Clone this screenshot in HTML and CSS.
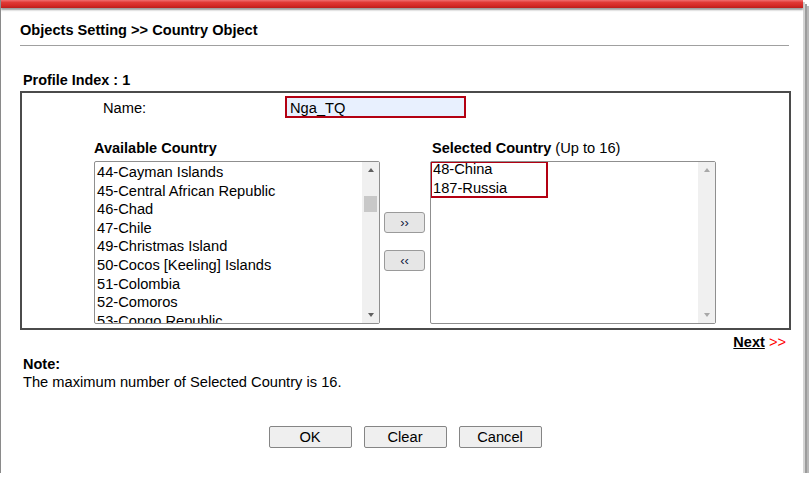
FILE: index.html
```html
<!DOCTYPE html>
<html lang="en">
<head>
<meta charset="UTF-8">
<title>Objects Setting - Country Object</title>
<link rel="stylesheet" href="styles.css">
</head>
<body>

<div class="window">
  <div class="topbar"></div>
  <div class="page">
    <h2 class="title">Objects Setting &gt;&gt; Country Object</h2>

    <div class="profile">Profile Index : 1</div>

    <div class="panel">
      <div class="name-row">
        <span class="name-label">Name:</span>
        <div class="name-input">Nga_TQ</div>
      </div>

      <div class="lists">
        <div class="col">
          <div class="col-title">Available Country</div>
          <div class="listbox">
            <div class="items">
              <div>44-Cayman Islands</div>
              <div>45-Central African Republic</div>
              <div>46-Chad</div>
              <div>47-Chile</div>
              <div>49-Christmas Island</div>
              <div>50-Cocos [Keeling] Islands</div>
              <div>51-Colombia</div>
              <div>52-Comoros</div>
              <div>53-Congo Republic</div>
            </div>
            <div class="scroll">
              <div class="arrow up"></div>
              <div class="track"><div class="thumb"></div></div>
              <div class="arrow down"></div>
            </div>
          </div>
        </div>

        <div class="movers">
          <button class="mover">&rsaquo;&rsaquo;</button>
          <button class="mover">&lsaquo;&lsaquo;</button>
        </div>

        <div class="col">
          <div class="col-title">Selected Country <span class="hint">(Up to 16)</span></div>
          <div class="listbox">
            <div class="items">
              <div class="picked">
                <div class="picked-items">
                  <div>48-China</div>
                  <div>187-Russia</div>
                </div>
              </div>
            </div>
            <div class="scroll off">
              <div class="arrow up"></div>
              <div class="track"></div>
              <div class="arrow down"></div>
            </div>
          </div>
        </div>
      </div>
    </div>

    <div class="next-row"><a href="#" class="next">Next</a> <span class="next-arrows">&gt;&gt;</span></div>

    <div class="note">
      <div class="note-title">Note:</div>
      <div>The maximum number of Selected Country is 16.</div>
    </div>

    <div class="actions">
      <button class="btn">OK</button>
      <button class="btn">Clear</button>
      <button class="btn">Cancel</button>
    </div>
  </div>
</div>

</body>
</html>
```

FILE: styles.css
```css
body {
  margin: 0;
  font-family: "Liberation Sans", Arial, sans-serif;
  font-size: 14.67px;
  color: #000;
  background-color: #fff;
}

.window {
  width: 803px;
  height: 473px;
  box-sizing: border-box;
  border-left: 1px solid #8a8a8a;
  background-color: #fff;
  box-shadow: 2px 2px 0 #d4d4d4, 4px 4px 0 #9c9c9c, 6px 6px 0 #b8b8b8;
}

.topbar {
  height: 8px;
  background: linear-gradient(#f07070 0, #e03a36 30%, #d42a26 70%, #bb1e1c 100%);
  box-shadow: 0 2px 2px #9a9a9a;
}

.page {
  padding: 0 12px 0 19px;
}

.title {
  margin: 14px 0 0 0;
  padding-bottom: 7px;
  font-size: 14.6px;
  line-height: 16px;
  font-weight: bold;
  border-bottom: 1px solid #a0a0a0;
  width: 769px;
}

.profile {
  margin-top: 26px;
  padding-left: 3px;
  font-size: 14.4px;
  font-weight: bold;
  line-height: 16px;
}

.panel {
  margin-top: 3px;
  height: 235px;
  border: 2px solid #4b4b4b;
}

.name-row {
  display: flex;
  align-items: flex-start;
  margin-top: 3px;
  padding-left: 81px;
}

.name-label {
  width: 182px;
  line-height: 24px;
}

.name-input {
  width: 174px;
  height: 18px;
  padding-left: 3px;
  line-height: 20px;
  border: 2px solid #b30012;
  background-color: #e8f0fe;
}

.lists {
  display: flex;
  margin-top: 20px;
  padding-left: 72px;
}

.col-title {
  font-size: 14.5px;
  font-weight: bold;
  line-height: 16px;
  margin-bottom: 5px;
}

.col + .movers + .col .col-title {
  padding-left: 2px;
}

.hint {
  font-size: 14.67px;
  font-weight: normal;
}

.listbox {
  display: flex;
  width: 286px;
  height: 163px;
  box-sizing: border-box;
  border: 1px solid #8f8f8f;
  border-radius: 2px;
  background-color: #fff;
}

.items {
  flex: 1;
  overflow: hidden;
  padding: 1px 0 0 2px;
  line-height: 18.6px;
  white-space: nowrap;
}

.scroll {
  width: 17px;
  display: flex;
  flex-direction: column;
  background-color: #f0f0f0;
}

.arrow {
  height: 16px;
  display: flex;
  align-items: center;
  justify-content: center;
}

.arrow::before {
  content: "";
  border-left: 3.5px solid transparent;
  border-right: 3.5px solid transparent;
}

.arrow.up::before {
  border-bottom: 4px solid #606060;
}

.arrow.down::before {
  border-top: 4px solid #606060;
}

.scroll.off .arrow.up::before {
  border-bottom-color: #a8a8a8;
}

.scroll.off .arrow.down::before {
  border-top-color: #a8a8a8;
}

.track {
  flex: 1;
}

.thumb {
  margin: 18px 2px 0 2px;
  height: 16px;
  background-color: #c8c8c8;
}

.movers {
  display: flex;
  flex-direction: column;
  gap: 17px;
  padding-top: 72px;
  margin: 0 5px 0 4px;
}

.mover {
  width: 41px;
  height: 21px;
  padding: 0;
  font-family: "Liberation Sans", Arial, sans-serif;
  font-size: 13px;
  color: #102040;
  background-color: #e6e6e6;
  border: 1px solid #9a9a9a;
  border-radius: 3px;
}

.picked {
  width: 114px;
  height: 33px;
  margin: -2px 0 0 -3px;
  border: 2px solid #b30012;
}

.picked-items {
  margin-top: -3px;
  padding-left: 1px;
  line-height: 18.5px;
}

.next-row {
  box-sizing: border-box;
  margin-top: 4px;
  padding-right: 4px;
  text-align: right;
  line-height: 16px;
  width: 770px;
}

.next {
  color: #000;
  font-size: 14.5px;
  font-weight: bold;
}

.next-arrows {
  color: #f00;
}

.note {
  margin-top: 5px;
  padding-left: 3px;
  line-height: 18px;
}

.note-title {
  font-size: 14.5px;
  font-weight: bold;
}

.actions {
  display: flex;
  justify-content: center;
  gap: 12px;
  margin-top: 35px;
  width: 770px;
}

.btn {
  width: 83px;
  height: 22px;
  padding: 0;
  font-family: "Liberation Sans", Arial, sans-serif;
  font-size: 14.67px;
  color: #000;
  background-color: #efefef;
  border: 1px solid #858585;
  border-radius: 2px;
}
```
